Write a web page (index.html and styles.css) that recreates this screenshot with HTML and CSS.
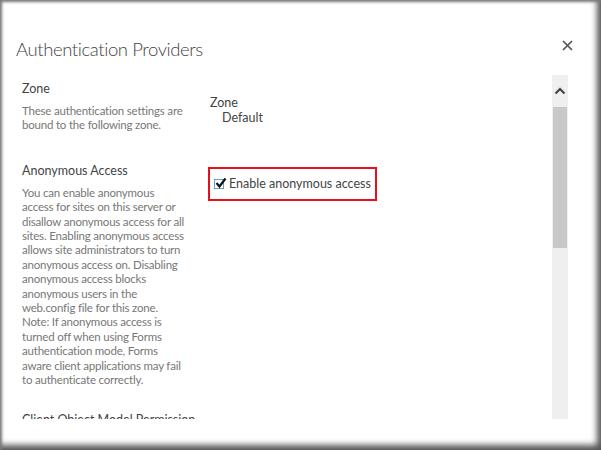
FILE: index.html
```html
<!DOCTYPE html>
<html lang="en">
<head>
    <meta charset="UTF-8">
    <title>Authentication Providers</title>
    <link rel="stylesheet" href="styles.css">
</head>
<body>
    <div class="dialog">
        <div class="title-row">
            <h1>Authentication Providers</h1>
            <button class="close" title="Close">
                <svg width="11" height="11" viewBox="0 0 11 11"><path d="M1 1 L10 10 M10 1 L1 10" stroke="#555" stroke-width="1.7" fill="none"/></svg>
            </button>
        </div>

        <div class="body">
            <div class="content">
                <div class="section">
                    <div class="info">
                        <h3>Zone</h3>
                        <p>These authentication settings are<br>bound to the following zone.</p>
                    </div>
                    <div class="field">
                        <div class="label">Zone</div>
                        <div class="value">Default</div>
                    </div>
                </div>

                <div class="section long">
                    <div class="info">
                        <h3>Anonymous Access</h3>
                        <p>You can enable anonymous<br>access for sites on this server or<br>disallow anonymous access for all<br>sites. Enabling anonymous access<br>allows site administrators to turn<br>anonymous access on. Disabling<br>anonymous access blocks<br>anonymous users in the<br>web.config file for this zone.<br>Note: If anonymous access is<br>turned off when using Forms<br>authentication mode, Forms<br>aware client applications may fail<br>to authenticate correctly.</p>
                    </div>
                    <div class="field">
                        <label class="check-row">
                            <span class="checkbox">
                                <svg width="12" height="12" viewBox="0 0 12 12"><path d="M1.5 6 L4.5 9.5 L10.5 1.5" stroke="#111" stroke-width="2.2" fill="none"/></svg>
                            </span>
                            Enable anonymous access
                        </label>
                    </div>
                </div>

                <div class="section">
                    <div class="info">
                        <h3>Client Object Model Permission<br>Requirement</h3>
                    </div>
                </div>
            </div>

            <!-- scrollbar -->
            <div class="scrollbar">
                <div class="scroll-btn">
                    <svg width="12" height="8" viewBox="0 0 12 8"><path d="M1.5 6.5 L6 2 L10.5 6.5" stroke="#444" stroke-width="2.2" fill="none"/></svg>
                </div>
                <div class="thumb"></div>
            </div>
        </div>
    </div>
</body>
</html>
```

FILE: styles.css
```css
* {
    margin: 0;
    padding: 0;
    box-sizing: border-box;
}

html, body {
    width: 601px;
    height: 450px;
    overflow: hidden;
}

body {
    font-family: Lato, "Open Sans", sans-serif;
    background: #fff;
    color: #444;
}

.dialog {
    height: 450px;
    padding: 36px 33px 0 16px;
    box-shadow: inset 3px 3px 3px -1px #777, inset -6px -7px 6px -2px #555;
}

.title-row {
    display: flex;
    justify-content: space-between;
    align-items: flex-start;
    height: 39px;
}

h1 {
    font-size: 18.5px;
    font-weight: 300;
    line-height: 26px;
    letter-spacing: -0.4px;
    color: #444;
}

.close {
    border: none;
    background: none;
    width: 11px;
    height: 11px;
    margin-top: 4px;
    margin-right: -5px;
}

.close svg {
    display: block;
}

.body {
    display: flex;
    height: 344px;
}

.content {
    flex: 1;
    overflow: hidden;
    padding: 5px 0 0 6px;
}

.section {
    display: grid;
    grid-template-columns: 186px 1fr;
    margin-bottom: 29px;
}

.section.long {
    margin-bottom: 23px;
}

h3 {
    font-size: 12.5px;
    font-weight: 400;
    line-height: 18px;
    color: #444;
    white-space: nowrap;
}

.info p {
    margin-top: 6px;
    font-size: 11.5px;
    line-height: 14.4px;
    letter-spacing: -0.2px;
    color: #777;
    white-space: nowrap;
}

.field {
    padding-top: 15px;
    font-size: 12.5px;
    color: #444;
}

.label {
    padding-left: 2px;
    line-height: 15px;
}

.value {
    padding-left: 14px;
    line-height: 16px;
}

.check-row {
    display: inline-flex;
    align-items: center;
    gap: 5px;
    border: 2px solid #e3101e;
    padding: 0 4px 1px 4px;
    margin-top: -23px;
    height: 34px;
    width: 169px;
    white-space: nowrap;
}

.checkbox {
    width: 10px;
    height: 10px;
    border: 1px solid #5aa0dc;
    position: relative;
}

.checkbox svg {
    position: absolute;
    left: 0;
    top: -3px;
}

.scrollbar {
    width: 16px;
    background: #efefef;
}

.scroll-btn {
    height: 32px;
    display: flex;
    justify-content: center;
    align-items: center;
}

.thumb {
    height: 141px;
    margin: 0 1px;
    background: #c8c8c8;
}
```
